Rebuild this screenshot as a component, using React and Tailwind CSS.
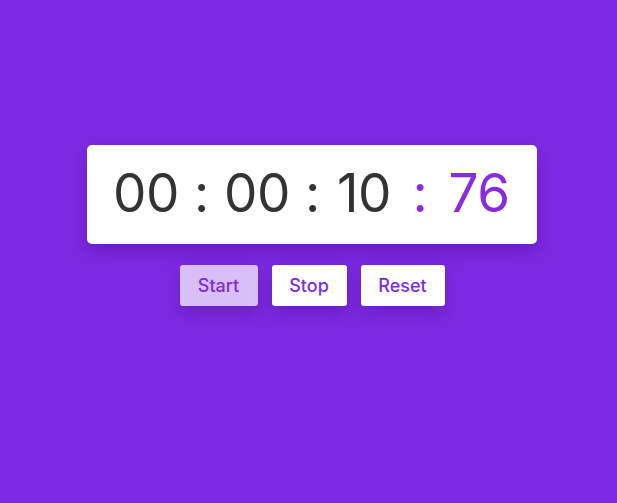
import React from "react";

const segments = [
  { text: "00", w: "w-[66px]", purple: false },
  { text: ":", w: "w-[45px]", purple: false },
  { text: "00", w: "w-[66px]", purple: false },
  { text: ":", w: "w-[45px]", purple: false },
  { text: "10", w: "w-[58px]", purple: false },
  { text: ":", w: "w-[54px]", purple: true },
  { text: "76", w: "w-[64px]", purple: true },
];

export default function App() {
  return (
    <div
      className="min-h-[503px] w-full bg-[#7e2ae4] flex flex-col items-center pt-[145px] pl-[7px]"
      style={{ fontFamily: "Inter, 'Open Sans', sans-serif" }}
    >
      {/* Timer display */}
      <div className="w-[450px] h-[99px] bg-white rounded-[5px] shadow-[0_8px_20px_rgba(60,0,120,0.35)] flex items-center justify-center">
        <div className="flex items-center text-[53px] font-normal leading-none tracking-[-0.5px] pb-[2px]">
          {segments.map((s, i) => (
            <span
              key={i}
              className={`${s.w} text-center ${s.purple ? "text-[#8a2be2]" : "text-[#333333]"}`}
            >
              {s.text}
            </span>
          ))}
        </div>
      </div>

      {/* Controls */}
      <div className="flex gap-[14px] mt-[21px]">
        <button className="w-[78px] h-[41px] rounded-[3px] bg-[#d9bff7] text-[#7e2ae4] text-[18px] font-medium shadow-[0_8px_18px_rgba(60,0,120,0.3)]">
          Start
        </button>
        <button className="w-[75px] h-[41px] rounded-[3px] bg-white text-[#7e2ae4] text-[18px] font-medium shadow-[0_8px_18px_rgba(60,0,120,0.3)]">
          Stop
        </button>
        <button className="w-[84px] h-[41px] rounded-[3px] bg-white text-[#7e2ae4] text-[18px] font-medium shadow-[0_8px_18px_rgba(60,0,120,0.3)]">
          Reset
        </button>
      </div>
    </div>
  );
}
